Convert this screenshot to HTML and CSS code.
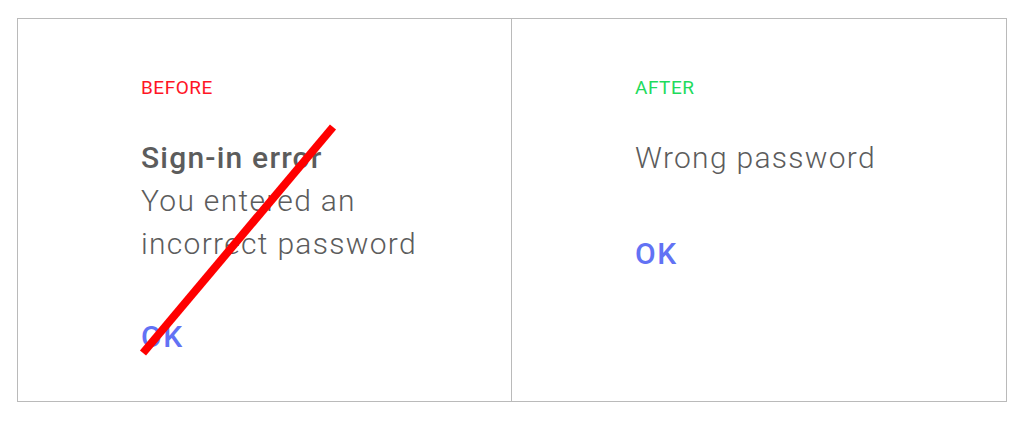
FILE: index.html
```html
<!DOCTYPE html>
<html>
<head>
<meta charset="utf-8">
<link rel="stylesheet" href="styles.css">
</head>
<body>
<div class="frame">
  <section class="panel before">
    <div class="label label-before">BEFORE</div>
    <div class="dialog">
      <div class="title">Sign-in error</div>
      <div class="body">You entered an<br>incorrect password</div>
      <div class="ok ok-before">OK</div>
    </div>
    <svg class="strike" width="494" height="384" viewBox="0 0 494 384">
      <line x1="125" y1="334" x2="315" y2="108" stroke="#ff0000" stroke-width="8"/>
    </svg>
  </section>
  <section class="panel after">
    <div class="label label-after">AFTER</div>
    <div class="dialog">
      <div class="body">Wrong password</div>
      <div class="ok ok-after">OK</div>
    </div>
  </section>
</div>
</body>
</html>
```

FILE: styles.css
```css
html, body {
  margin: 0;
  padding: 0;
  background: #ffffff;
}
body {
  font-family: Roboto, "Liberation Sans", sans-serif;
  padding: 18px 16px 0 17px;
}
.frame {
  display: flex;
  width: 988px;
  height: 382px;
  border: 1px solid #bababa;
}
.panel {
  position: relative;
  flex: 1;
  padding: 0 0 0 123px;
  box-sizing: border-box;
}
.panel.before {
  flex: 0 0 494px;
  border-right: 1px solid #bababa;
}
.label {
  margin-top: 58px;
  font-size: 19px;
  line-height: 22px;
  letter-spacing: 0.5px;
}
.label-before { color: #ff1525; }
.label-after { color: #1edb5c; }
.dialog {
  margin-top: 37px;
}
.title {
  font-size: 30px;
  font-weight: 500;
  line-height: 43px;
  letter-spacing: 1.2px;
  color: #5c5c5c;
}
.body {
  font-size: 30px;
  font-weight: 300;
  line-height: 43px;
  letter-spacing: 1.3px;
  color: #5c5c5c;
}
.ok {
  font-size: 30px;
  font-weight: 500;
  line-height: 43px;
  letter-spacing: 1.5px;
  color: #6272f4;
}
.ok-before { margin-top: 50px; }
.ok-after { margin-top: 53px; }
.strike {
  position: absolute;
  left: 0;
  top: 0;
}
```
